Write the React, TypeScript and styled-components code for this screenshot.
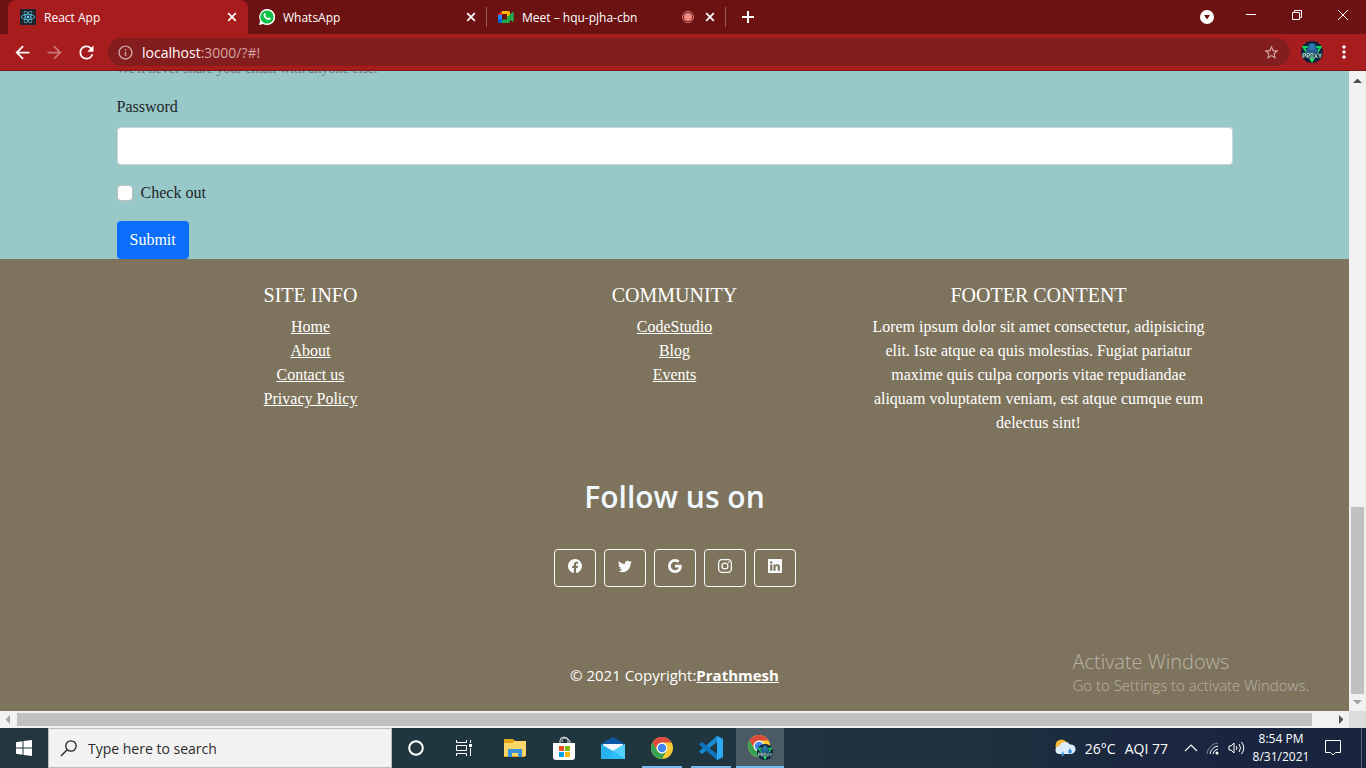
import React from "react";
import styled, { createGlobalStyle } from "styled-components";
import { BsFacebook, BsTwitter, BsGoogle, BsInstagram, BsLinkedin } from "react-icons/bs";
import { MdArrowBack, MdArrowForward, MdRefresh, MdInfoOutline, MdStarBorder, MdMoreVert } from "react-icons/md";
import { FaReact } from "react-icons/fa";

const ui = `"Segoe UI", "Open Sans", "Noto Sans", sans-serif`;
const serif = `"Times New Roman", "Liberation Serif", serif`;

const GlobalStyle = createGlobalStyle`
  *, *::before, *::after { box-sizing: border-box; }
  body { margin: 0; font-family: ${ui}; }
  button, input { font-family: inherit; }
  svg { display: block; flex: none; }
`;

const Desktop = styled.div`
  display: flex;
  flex-direction: column;
  height: 100vh;
  overflow: hidden;
`;

/* Browser chrome */
const TabStrip = styled.div`
  display: flex;
  flex: none;
  height: 34px;
  padding-left: 8px;
  background: #6c1213;
  color: #fff;
`;
const Tab = styled.div<{ $active?: boolean }>`
  display: flex;
  align-items: center;
  flex: 0 1 ${(p) => (p.$active ? 240 : 238)}px;
  height: 34px;
  padding: ${(p) => (p.$active ? "0 8px 0 12px" : "0 7px 0 11px")};
  gap: 8px;
  font-size: 12px;
  border-radius: 8px 8px 0 0;
  background: ${(p) => (p.$active ? "#a71d1e" : "transparent")};
`;
const TabTitle = styled.span`
  flex: 1;
  white-space: nowrap;
`;
const Divider = styled.span`
  width: 1px;
  height: 20px;
  margin-top: 7px;
  background: #98595a;
`;
const IconButton = styled.button<{ $w?: number; $dim?: boolean }>`
  display: flex;
  align-items: center;
  justify-content: center;
  flex: none;
  width: ${(p) => p.$w ?? 16}px;
  padding: 0;
  border: 0;
  background: none;
  color: #fff;
  opacity: ${(p) => (p.$dim ? 0.4 : 1)};
`;
const WindowControls = styled.div`
  display: flex;
  margin-left: auto;
  height: 30px;
`;
const TabSearch = styled(IconButton)`
  height: 34px;
`;
const Toolbar = styled.div`
  display: flex;
  align-items: center;
  flex: none;
  height: 37px;
  padding: 0 7px 0 6px;
  background: #a71d1e;
  border-bottom: 1px solid #7c1617;
`;
const AddressBar = styled.div`
  display: flex;
  align-items: center;
  flex: 1;
  height: 28px;
  margin: 0 5px 0 6px;
  padding: 0 10px 0 9px;
  gap: 8px;
  border-radius: 14px;
  background: #831d1e;
  color: #d3a5a5;
  font-size: 14px;
`;
const Url = styled.span`
  flex: 1;
  b { font-weight: 400; color: #fff; }
`;

/* Page */
const Body = styled.div`
  display: flex;
  flex: 1;
  min-height: 0;
`;
const Viewport = styled.main`
  position: relative;
  display: flex;
  flex-direction: column;
  justify-content: flex-end;
  flex: 1;
  min-width: 0;
  overflow: hidden;
  background: #98c9c8;
  color: #212529;
  font-family: ${serif};
  font-size: 16px;
  line-height: 24px;
`;
const Form = styled.form`
  width: 100%;
  max-width: 1140px;
  margin: 0 auto;
  padding: 0 12px;
`;
const HelpText = styled.div`
  margin-bottom: 16px;
  font-size: 14px;
  line-height: 21px;
  color: #6c757d;
`;
const FieldLabel = styled.label`
  display: block;
  margin-bottom: 8px;
`;
const TextField = styled.input`
  display: block;
  width: 100%;
  height: 38px;
  margin-bottom: 16px;
  padding: 6px 12px;
  border: 1px solid #ced4da;
  border-radius: 4px;
  background: #fff;
`;
const CheckRow = styled.div`
  display: flex;
  align-items: center;
  gap: 8px;
  margin-bottom: 16px;
`;
const Checkbox = styled.input`
  appearance: none;
  width: 16px;
  height: 16px;
  margin: 0;
  border: 1px solid #bfbfbf;
  border-radius: 4px;
  background: #fff;
`;
const SubmitButton = styled.button`
  display: block;
  height: 38px;
  padding: 0 13px;
  border: 0;
  border-radius: 4px;
  background: #0d6efd;
  color: #fff;
  font-size: 16px;
`;
const Footer = styled.footer`
  flex: none;
  padding: 24px 0;
  background: #7e735c;
  color: #fff;
  text-align: center;
`;
const Columns = styled.div`
  display: grid;
  grid-template-columns: repeat(3, 1fr);
  max-width: 1092px;
  margin: 0 auto;
`;
const Column = styled.section`
  padding: 0 12px;
`;
const ColumnTitle = styled.h5`
  margin: 0 0 8px;
  font-size: 20px;
  font-weight: 400;
  line-height: 24px;
  text-transform: uppercase;
`;
const LinkList = styled.ul`
  margin: 0;
  padding: 0;
  list-style: none;
  a { color: #fff; }
`;
const Paragraph = styled.p`
  margin: 0;
`;
const FollowTitle = styled.h2`
  margin: 42px 0 32px;
  font-family: ${ui};
  font-size: 30px;
  font-weight: 600;
  line-height: 40px;
  color: #f0f8ff;
`;
const SocialRow = styled.div`
  display: flex;
  justify-content: center;
  gap: 8px;
`;
const SocialButton = styled.a`
  display: flex;
  justify-content: center;
  width: 42px;
  height: 38px;
  padding-top: 9px;
  border: 1px solid #f8f9fa;
  border-radius: 4px;
  color: #f8f9fa;
  font-size: 14px;
`;
const Copyright = styled.div`
  margin-top: 76px;
  font-family: ${ui};
  font-size: 15px;
  a { color: #fff; font-weight: 700; }
`;
const Watermark = styled.div`
  position: absolute;
  right: 40px;
  bottom: 15px;
  font-family: ${ui};
  font-size: 15px;
  font-weight: 300;
  line-height: 22px;
  color: #b9b4aa;
`;
const WatermarkTitle = styled.div`
  font-size: 20px;
  line-height: 24px;
`;

/* Scroll bars */
const VScroll = styled.div`
  display: flex;
  flex-direction: column;
  justify-content: space-between;
  align-items: center;
  width: 17px;
  padding: 6px 0 5px;
  background: #f1f1f1;
`;
const VThumb = styled.div`
  width: 13px;
  height: 187px;
  margin: auto 0 3px;
  background: #c1c1c1;
`;
const HScroll = styled.div`
  display: flex;
  align-items: center;
  flex: none;
  height: 17px;
  padding-left: 5px;
  background: #f1f1f1;
`;
const HThumb = styled.div`
  flex: 1;
  height: 13px;
  margin: 0 24px 0 3px;
  background: #c1c1c1;
`;
const Corner = styled.div`
  width: 17px;
  height: 17px;
  margin-left: 4px;
  background: #dcdcdc;
`;

/* Taskbar */
const Taskbar = styled.div`
  display: flex;
  flex: none;
  height: 40px;
  background: linear-gradient(90deg, #21363d 0%, #20363f 50%, #1e303e 72%, #1a2640 85%, #19243f 100%);
  color: #fff;
`;
const SearchBox = styled.label`
  display: flex;
  align-items: center;
  flex: 0 0 344px;
  padding: 0 11px;
  gap: 10px;
  border: 1px solid #bebebe;
  background: #f2f2f2;
`;
const SearchInput = styled.input`
  flex: 1;
  min-width: 0;
  padding: 0;
  border: 0;
  outline: 0;
  background: none;
  font-size: 14px;
  &::placeholder { color: #2b2b2b; opacity: 1; }
`;
const TaskButton = styled.button`
  display: flex;
  align-items: center;
  justify-content: center;
  width: 48px;
  padding: 0;
  border: 0;
  background: none;
`;
const PinnedApps = styled.div`
  display: flex;
  margin-left: 2px;
`;
const PinnedButton = styled(TaskButton)`
  width: 49px;
`;
const RunningButton = styled(TaskButton)<{ $active?: boolean }>`
  width: ${(p) => (p.$active ? 48 : 40)}px;
  margin: ${(p) => (p.$active ? "0 0 0 1px" : "0 4px 0 5px")};
  padding-top: 2px;
  border-bottom: 2px solid #76b9ed;
  background: ${(p) => (p.$active ? "#4b5b66" : "none")};
`;
const Tray = styled.div`
  display: flex;
  align-items: center;
  margin-left: auto;
  font-size: 14px;
  white-space: nowrap;
`;
const Weather = styled.div`
  display: flex;
  align-items: center;
  gap: 9px;
  margin-right: 16px;
`;
const TrayIcons = styled.div`
  display: flex;
  align-items: center;
  gap: 8px;
`;
const Clock = styled.div`
  width: 68px;
  margin: 0 4px 0 1px;
  font-size: 12px;
  line-height: 18px;
  text-align: center;
`;
const ShowDesktop = styled.div`
  width: 5px;
  height: 40px;
  margin-left: 14px;
  border-left: 1px solid #5d6678;
`;

const Proxy = ({ size }: { size: number }) => (
  <svg width={size} height={size} viewBox="0 0 22 22">
    <circle cx="11" cy="11" r="11" fill="#10213d" />
    <path d="M2.500 6H19.500L11 20Z" fill="none" stroke="#15d65c" strokeWidth="2" />
    <path d="M5 12 C5 8 7 6 8 3 Q11 1 14 3 C15 6 17 8 17 12 Z" fill="#205f91" />
    <path d="M8 5 L11 2 L14 5 L13 9 L9 9Z" fill="#2f77a8" />
    <path d="M1 12 H21 V17 H1Z" fill="#18384c" />
    <path d="M2 17V12.500H4.500V15H2M6 17V12.500H8.500V15H6L8.500 17M10 12.500H12V17H10ZM13.500 12.500L16.500 17M16.500 12.500L13.500 17M17.500 12.500L19 15L20.500 12.500M19 15V17" fill="none" stroke="#a9d4c8" />
    <path d="M9 18H13L11 21Z" fill="#18ed55" />
  </svg>
);

const Chrome = () => (
  <svg width="22" height="22" viewBox="0 0 22 22">
    <circle cx="11" cy="11" r="11" fill="#fbc934" />
    <path d="M1.5 5.5A11 11 0 0 1 20.5 5.5H11A5.5 5.5 0 0 0 6.2 13.8Z" fill="#dd4b3e" />
    <path d="M1.5 5.5A11 11 0 0 0 11 22L15.8 13.8A5.5 5.5 0 0 1 6.2 13.8Z" fill="#35a353" />
    <circle cx="11" cy="11" r="5.4" fill="#fff" />
    <circle cx="11" cy="11" r="4.3" fill="#4587f0" />
  </svg>
);

const Arrow = ({ d, fill }: { d: string; fill: string }) => (
  <svg width="9" height="9" viewBox="0 0 9 9"><path d={d} fill={fill} /></svg>
);

const CloseTab = () => (
  <IconButton aria-label="Close tab">
    <svg width="10" height="10" viewBox="0 0 10 10">
      <path d="M1.200 1.200L8.800 8.800M8.800 1.200L1.200 8.800" stroke="#fff" strokeWidth="1.700" />
    </svg>
  </IconButton>
);

const siteLinks = ["Home", "About", "Contact us", "Privacy Policy"];
const communityLinks = ["CodeStudio", "Blog", "Events"];
const socials = [
  { name: "Facebook", Icon: BsFacebook },
  { name: "Twitter", Icon: BsTwitter },
  { name: "Google", Icon: BsGoogle },
  { name: "Instagram", Icon: BsInstagram },
  { name: "LinkedIn", Icon: BsLinkedin },
];

const Links = ({ items }: { items: string[] }) => (
  <LinkList>
    {items.map((item) => (
      <li key={item}><a href="#!">{item}</a></li>
    ))}
  </LinkList>
);

export default function App() {
  return (
    <Desktop>
      <GlobalStyle />
      <TabStrip>
        <Tab $active>
          <svg width="16" height="16" viewBox="0 0 16 16">
            <rect width="16" height="16" rx="1" fill="#20232a" />
            <FaReact x="1" y="1" size={14} color="#61dafb" />
          </svg>
          <TabTitle>React App</TabTitle>
          <CloseTab />
        </Tab>
        <Tab>
          <svg width="16" height="16" viewBox="0 0 16 16">
            <path d="M0 16 L1.2 11.8 A8 8 0 1 1 4.2 14.9Z" fill="#fff" />
            <circle cx="8" cy="8" r="6.6" fill="#10bd45" />
            <path d="M5.4 4.2c.5-.4.9-.2 1 .2l.5 1.2c.1.4-.5.8-.6 1.1.6 1.2 1.6 2 2.8 2.5.4-.2.7-1 1.1-.9l1.3.7c.4.2.1 1.2-.4 1.6-1.1.8-2.700.4-4.200-.7C5.500 8.800 4.600 7.600 4.500 6.300c0-.8.3-1.700.9-2.100Z" fill="#fff" />
          </svg>
          <TabTitle>WhatsApp</TabTitle>
          <CloseTab />
        </Tab>
        <Divider />
        <Tab>
          <svg width="16" height="16" viewBox="0 0 16 16">
            <path d="M0 6 L4 2V6Z" fill="#e94235" />
            <path d="M0 6H4V10H0Z" fill="#2684fc" />
            <path d="M0 10H4V14H1.500Q0 14 0 12.500Z" fill="#0066da" />
            <path d="M4 2H10.500Q12 2 12 3.500V7L9 8V5H4Z" fill="#ffba00" />
            <path d="M4 10.500H9V8L12 5.500 15 3Q15.700 3 15.700 4V12Q15.700 13 15 13L12 10.500V12.500Q12 14 10.500 14H4Z" fill="#1eab4b" />
          </svg>
          <TabTitle>Meet – hqu-pjha-cbn</TabTitle>
          <svg width="12" height="12" viewBox="0 0 12 12">
            <circle cx="6" cy="6" r="5.500" fill="none" stroke="#d9827c" />
            <circle cx="6" cy="6" r="4" fill="#f28b82" />
          </svg>
          <CloseTab />
        </Tab>
        <Divider />
        <IconButton $w={44} aria-label="New tab">
          <svg width="12" height="12" viewBox="0 0 12 12"><path d="M6 0V12M0 6H12" stroke="#fff" strokeWidth="2" /></svg>
        </IconButton>
        <WindowControls>
          <TabSearch $w={42} aria-label="Search tabs">
            <svg width="14" height="14" viewBox="0 0 14 14">
              <circle cx="7" cy="7" r="7" fill="#fff" />
              <path d="M4 5H10L7 9.500Z" fill="#6c1213" />
            </svg>
          </TabSearch>
          <IconButton $w={46} aria-label="Minimize">
            <svg width="10" height="10" viewBox="0 0 10 10"><path d="M0 4.500H10" stroke="#fff" /></svg>
          </IconButton>
          <IconButton $w={46} aria-label="Restore">
            <svg width="10" height="10" viewBox="0 0 10 10"><path d="M.5 2.500H7.500V9.500H.5ZM2.500 2.500V.5H9.500V7.500H7.500" fill="none" stroke="#fff" /></svg>
          </IconButton>
          <IconButton $w={46} aria-label="Close">
            <svg width="10" height="10" viewBox="0 0 10 10"><path d="M0 0L10 10M10 0L0 10" stroke="#fff" /></svg>
          </IconButton>
        </WindowControls>
      </TabStrip>
      <Toolbar>
        <IconButton $w={32} aria-label="Back"><MdArrowBack size={21} /></IconButton>
        <IconButton $w={32} $dim aria-label="Forward"><MdArrowForward size={21} /></IconButton>
        <IconButton $w={32} aria-label="Reload"><MdRefresh size={21} /></IconButton>
        <AddressBar>
          <MdInfoOutline size={17} />
          <Url><b>localhost</b>:3000/?#!</Url>
          <MdStarBorder size={17} />
        </AddressBar>
        <IconButton $w={34} aria-label="Profile"><Proxy size={22} /></IconButton>
        <IconButton $w={30} aria-label="Menu"><MdMoreVert size={20} /></IconButton>
      </Toolbar>

      <Body>
        <Viewport>
          <Form>
            <HelpText>We'll never share your email with anyone else.</HelpText>
            <FieldLabel htmlFor="password">Password</FieldLabel>
            <TextField id="password" type="password" />
            <CheckRow>
              <Checkbox id="check" type="checkbox" />
              <label htmlFor="check">Check out</label>
            </CheckRow>
            <SubmitButton type="button">Submit</SubmitButton>
          </Form>
          <Footer>
            <Columns>
              <Column>
                <ColumnTitle>Site info</ColumnTitle>
                <Links items={siteLinks} />
              </Column>
              <Column>
                <ColumnTitle>Community</ColumnTitle>
                <Links items={communityLinks} />
              </Column>
              <Column>
                <ColumnTitle>Footer content</ColumnTitle>
                <Paragraph>
                  Lorem ipsum dolor sit amet consectetur, adipisicing elit. Iste atque ea quis molestias. Fugiat
                  pariatur maxime quis culpa corporis vitae repudiandae aliquam voluptatem veniam, est atque cumque
                  eum delectus sint!
                </Paragraph>
              </Column>
            </Columns>
            <FollowTitle>Follow us on</FollowTitle>
            <SocialRow>
              {socials.map(({ name, Icon }) => (
                <SocialButton key={name} href="#!" aria-label={name}><Icon /></SocialButton>
              ))}
            </SocialRow>
            <Copyright>© 2021 Copyright:<a href="#!">Prathmesh</a></Copyright>
          </Footer>
          <Watermark>
            <WatermarkTitle>Activate Windows</WatermarkTitle>
            Go to Settings to activate Windows.
          </Watermark>
        </Viewport>
        <VScroll>
          <Arrow d="M0 6L4 2H5L9 6Z" fill="#505050" />
          <VThumb />
          <Arrow d="M0 3L4 7H5L9 3Z" fill="#a3a3a3" />
        </VScroll>
      </Body>
      <HScroll>
        <Arrow d="M5 0V9L1 5V4Z" fill="#a3a3a3" />
        <HThumb />
        <Arrow d="M3 0V9L7 5V4Z" fill="#505050" />
        <Corner />
      </HScroll>

      <Taskbar>
        <TaskButton aria-label="Start">
          <svg width="16" height="16" viewBox="0 0 16 16">
            <path d="M0 2.200L6.500 1.300V7.500H0ZM7.500 1.100L16 0V7.500H7.500ZM0 8.500H6.500V14.700L0 13.800ZM7.500 8.500H16V16L7.500 14.900Z" fill="#fff" />
          </svg>
        </TaskButton>
        <SearchBox>
          <svg width="18" height="18" viewBox="0 0 18 18">
            <circle cx="11" cy="7" r="5.200" fill="none" stroke="#222" strokeWidth="1.300" />
            <path d="M7.200 10.800L1 17" stroke="#222" strokeWidth="1.300" />
          </svg>
          <SearchInput type="text" aria-label="Search" placeholder="Type here to search" />
        </SearchBox>
        <TaskButton aria-label="Cortana">
          <svg width="16" height="16" viewBox="0 0 16 16"><circle cx="8" cy="8" r="6.800" fill="none" stroke="#fff" strokeWidth="2" /></svg>
        </TaskButton>
        <TaskButton aria-label="Task view">
          <svg width="16" height="16" viewBox="0 0 16 16">
            <path d="M.5 0V2.500H10.500V0M.5 16V13.500H10.500V16M.5 5.500H10.500V10.500H.5ZM14.500 0V3M14.500 8V16" fill="none" stroke="#fff" />
            <path d="M13 4H16V7H13Z" fill="#fff" />
          </svg>
        </TaskButton>
        <PinnedApps>
          <PinnedButton aria-label="File Explorer">
            <svg width="22" height="20" viewBox="0 0 22 20">
              <path d="M0 1H9L11 3H21V19H0Z" fill="#e5a50e" />
              <path d="M0 5H9L10 3H22V18H0Z" fill="#fbd668" />
              <path d="M4 19V11H18V19H14V15H8V19Z" fill="#3c91db" />
            </svg>
          </PinnedButton>
          <PinnedButton aria-label="Microsoft Store">
            <svg width="24" height="24" viewBox="0 0 24 24">
              <path d="M8 7V4.500Q8 1 12 1T16 4.500V7M10 6V4Q10 2 13 2T18 5V7" fill="none" stroke="#ddd" />
              <path d="M1 7H23V21Q23 24 20 24H4Q1 24 1 21Z" fill="#fff" />
              <path d="M7 10H12V15H7Z" fill="#f25022" /><path d="M13 10H18V15H13Z" fill="#7fba00" />
              <path d="M7 16H12V21H7Z" fill="#00a4ef" /><path d="M13 16H18V21H13Z" fill="#ffb900" />
            </svg>
          </PinnedButton>
          <PinnedButton aria-label="Mail">
            <svg width="24" height="22" viewBox="0 0 24 22">
              <path d="M0 7L12 0L24 7V12H0Z" fill="#0b58a8" />
              <path d="M2 7H22V10L12 15L2 10Z" fill="#f4f8fc" />
              <path d="M0 7L12 14L24 7V22H0Z" fill="#29b0ee" />
              <path d="M24 7V22L12 14Z" fill="#50d0fb" />
              <path d="M12 14L24 22H9Z" fill="#2fbdf4" />
            </svg>
          </PinnedButton>
          <RunningButton aria-label="Chrome"><Chrome /></RunningButton>
          <RunningButton aria-label="Visual Studio Code">
            <svg width="24" height="24" viewBox="0 0 24 24">
              <path d="M18 0L24 3V21L18 24V6L3 18L0 15.500Z" fill="#168bd2" />
              <path d="M3 6L0 8.500L18 24V18Z" fill="#0b74bc" />
              <path d="M18 0L24 3V21L18 24Z" fill="#2fa8f2" />
            </svg>
          </RunningButton>
          <RunningButton $active aria-label="Chrome, Proxy profile">
            <svg width="25" height="26" viewBox="0 0 25 26"><Chrome /><svg x="9" y="9" width="16" height="16"><Proxy size={16} /></svg></svg>
          </RunningButton>
        </PinnedApps>
        <Tray>
          <Weather>
            <svg width="21" height="18" viewBox="0 0 21 18">
              <circle cx="6.500" cy="6.500" r="6" fill="#f8b936" />
              <path d="M4.500 15A4 4 0 0 1 4.500 7A6 6 0 0 1 15 5.500A4.800 4.800 0 0 1 16.500 15Z" fill="#dcebfa" />
              <path d="M8 12L6 16Q8 18 9 16ZM15 9L13 13Q15 16 17 13Z" fill="#328de0" />
            </svg>
            <span>26°C</span><span>AQI 77</span>
          </Weather>
          <TrayIcons>
            <svg width="14" height="10" viewBox="0 0 14 10"><path d="M1 8L7 2L13 8" fill="none" stroke="#fff" strokeWidth="1.200" /></svg>
            <svg width="14" height="14" viewBox="0 0 14 14">
              <path d="M1 13A12 12 0 0 1 12 2" fill="none" stroke="#7d869a" /><path d="M4 13A9 9 0 0 1 12 5M7 13A6 6 0 0 1 12 8" fill="none" stroke="#fff" />
              <circle cx="11" cy="12" r="1.500" fill="#fff" />
            </svg>
            <svg width="18" height="14" viewBox="0 0 18 14">
              <path d="M1 5H3L6 2V12L3 9H1ZM8 5Q10 7 8 9M11 3Q14 7 11 11M13.500 1Q18 7 13.500 13" fill="none" stroke="#fff" />
            </svg>
          </TrayIcons>
          <Clock>8:54 PM<br />8/31/2021</Clock>
          <IconButton $w={28} aria-label="Notifications">
            <svg width="16" height="16" viewBox="0 0 16 16"><path d="M.5 .5H15.500V12.500H10.500L8 15L5.500 12.500H.5Z" fill="none" stroke="#fff" /></svg>
          </IconButton>
          <ShowDesktop />
        </Tray>
      </Taskbar>
    </Desktop>
  );
}
